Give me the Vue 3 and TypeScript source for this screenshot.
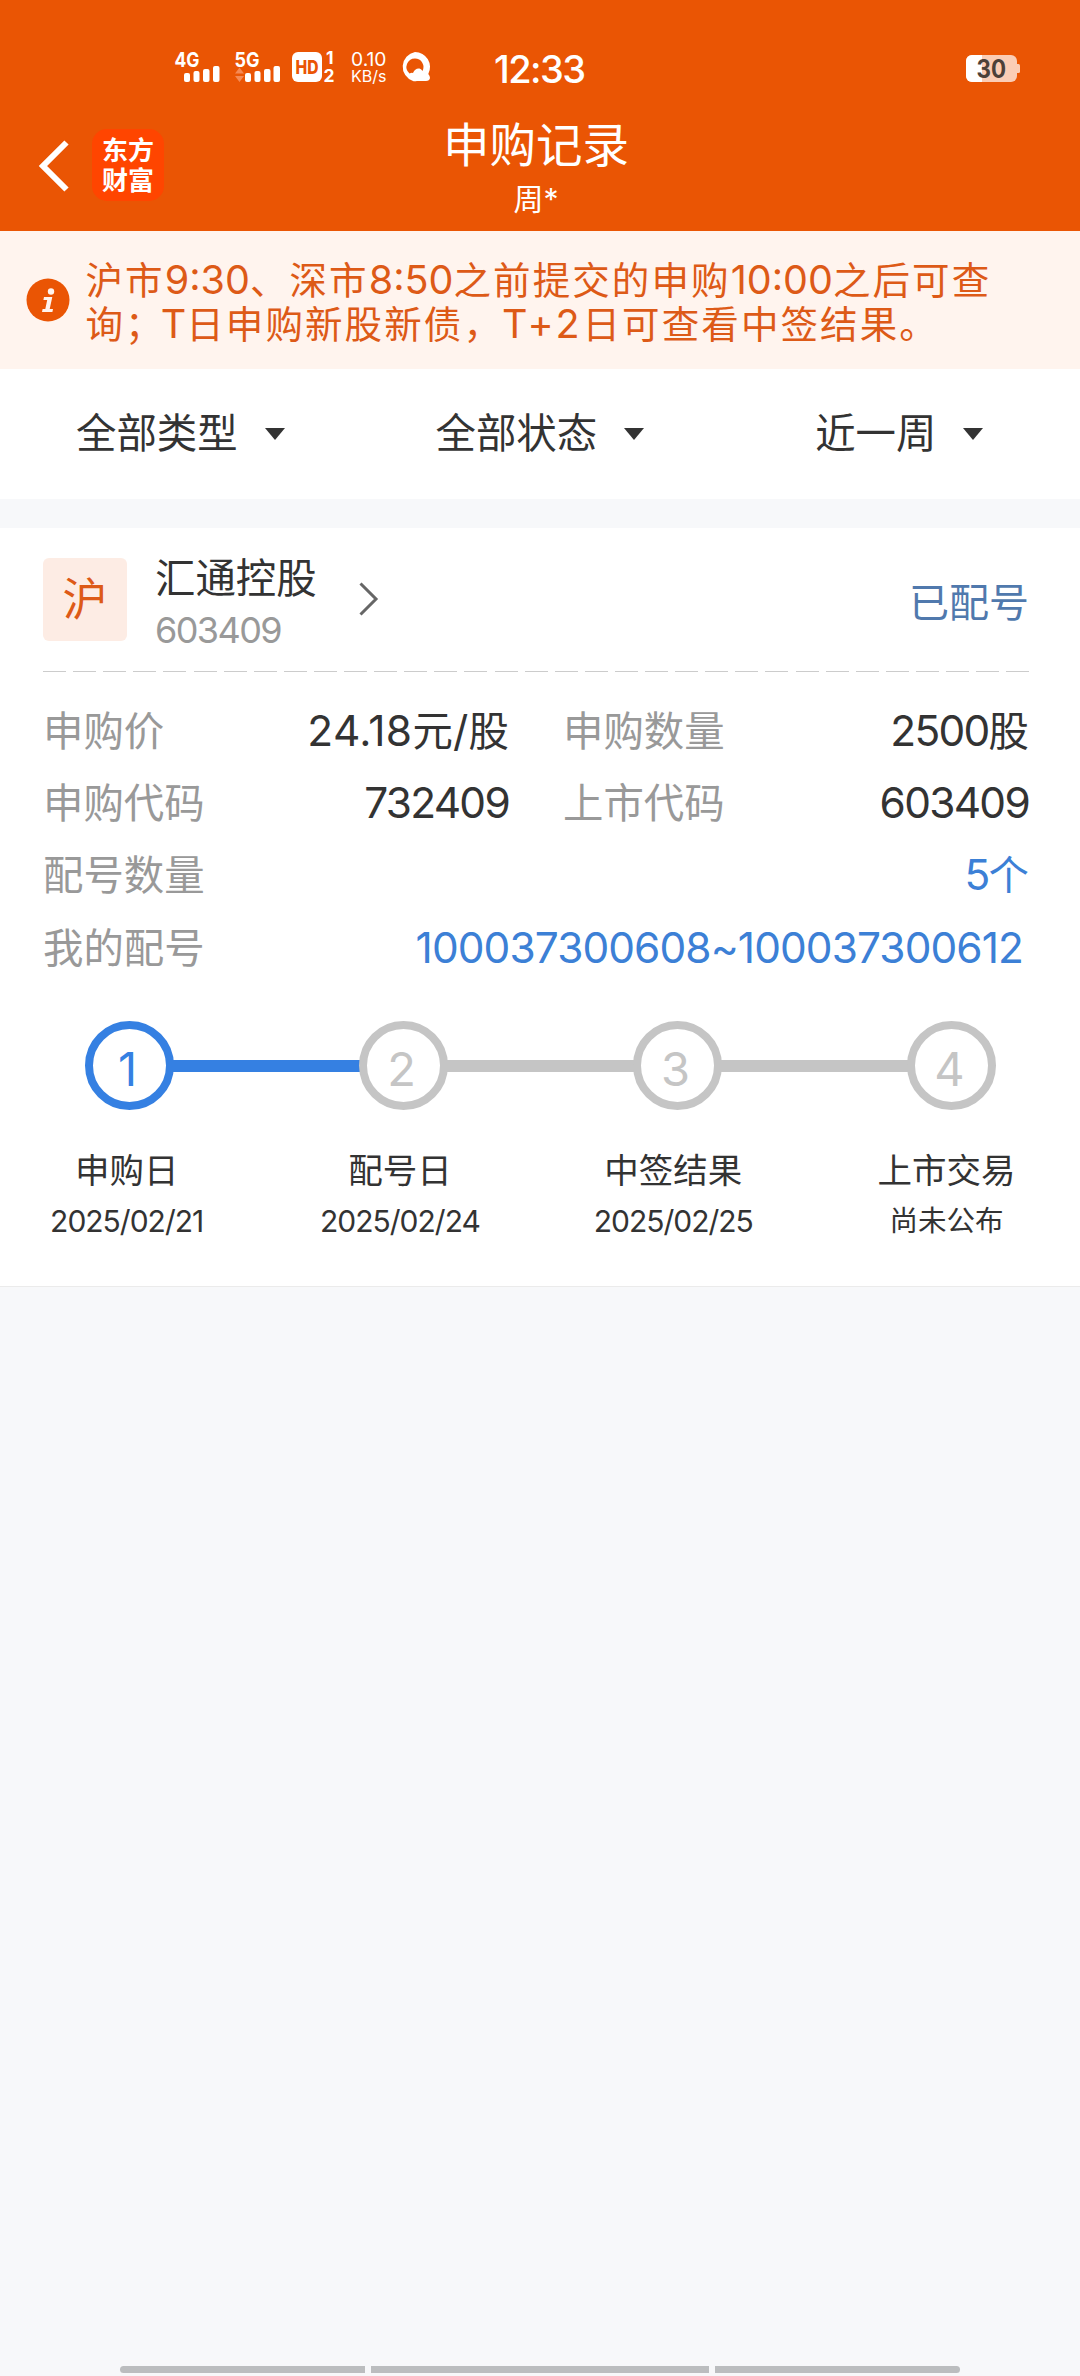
<script setup lang="ts">
interface Filter { label: string; id: string }
interface Step { no: number; title: string; date: string; done: boolean }

const filters: Filter[] = [
  { label: '全部类型', id: 'by-type' },
  { label: '全部状态', id: 'by-state' },
  { label: '近一周', id: 'by-range' },
]

const steps: Step[] = [
  { no: 1, title: '申购日', date: '2025/02/21', done: true },
  { no: 2, title: '配号日', date: '2025/02/24', done: false },
  { no: 3, title: '中签结果', date: '2025/02/25', done: false },
  { no: 4, title: '上市交易', date: '尚未公布', done: false },
]
</script>

<template>
  <div class="screen">
    <header class="header">
      <div class="status">
        <svg class="sig4" width="46" height="30" viewBox="0 0 46 30" fill="#fff">
          <text x="-0.5" y="15" class="net" textLength="25" lengthAdjust="spacingAndGlyphs">4G</text>
          <rect x="9" y="21" width="6" height="9" rx="2" />
          <rect x="18.5" y="19" width="6" height="11" rx="2" />
          <rect x="28" y="17" width="6.5" height="13" rx="2" />
          <rect x="38" y="14" width="6.5" height="16" rx="2" />
        </svg>
        <svg class="sig5" width="46" height="30" viewBox="0 0 46 30" fill="#fff">
          <text x="-0.5" y="15" class="net" textLength="25" lengthAdjust="spacingAndGlyphs">5G</text>
          <path d="M0 21.5 4.5 15.5 9 21.5Z M0 24 9 24 4.5 30Z" fill="#f58a55" />
          <rect x="10" y="21" width="6" height="9" rx="2" />
          <rect x="19.5" y="19" width="6" height="11" rx="2" />
          <rect x="29" y="17" width="6.5" height="13" rx="2" />
          <rect x="38.5" y="14" width="6.5" height="16" rx="2" />
        </svg>
        <svg class="hd" width="43" height="30" viewBox="0 0 43 30" fill="#fff">
          <rect width="30" height="30" rx="6" />
          <text x="3.5" y="22" class="hdt" textLength="23" lengthAdjust="spacingAndGlyphs">HD</text>
          <text x="34" y="12" class="sim">1</text>
          <text x="31.5" y="30" class="sim" textLength="11" lengthAdjust="spacingAndGlyphs">2</text>
        </svg>
        <svg class="speed" width="36" height="32" viewBox="0 0 36 32" fill="#fff">
          <text x="0" y="14" font-size="19" textLength="35.5" lengthAdjust="spacingAndGlyphs">0.10</text>
          <text x="0" y="29.8" font-size="16" textLength="35.5" lengthAdjust="spacingAndGlyphs">KB/s</text>
        </svg>
        <svg class="q" width="30" height="30" viewBox="0 0 30 30">
          <path fill="#fff" fill-rule="evenodd" d="M15 0A15 15 0 0 1 28.3 22Q30 24 30 26Q29.500 29 26 29L17 29Q14 29.500 13 29A15 15 0 0 1 15 0ZM15 6.500A8.500 8.500 0 0 0 9.500 21.500Q11.500 20.500 13 21Q15 16 19.500 16.500Q21.500 17 22.500 19A8.500 8.500 0 0 0 15 6.500Z" />
        </svg>
        <span class="clock">12:33</span>
        <svg class="battery" width="54" height="27" viewBox="0 0 54 27">
          <defs><clipPath id="cell"><rect width="51" height="27" rx="6" /></clipPath></defs>
          <g clip-path="url(#cell)">
            <rect width="51" height="27" fill="#fbcdb5" />
            <rect width="16" height="27" fill="#fff" />
          </g>
          <path d="M51 9h1.500q1.500 0 1.500 1.500v6q0 1.500-1.500 1.500h-1.500z" fill="#fbcdb5" />
          <text x="10.500" y="22.500" class="level" textLength="29.500" lengthAdjust="spacingAndGlyphs">30</text>
        </svg>
      </div>
      <div class="nav">
        <svg class="back" width="32" height="56" viewBox="0 0 32 56">
          <path d="M28.500 4.500 5 28 28.500 51.500" fill="none" stroke="#fff" stroke-width="6" stroke-linecap="butt" />
        </svg>
        <div class="logo"><span>东方</span><span>财富</span></div>
        <div class="heading">
          <h1>申购记录</h1>
          <p>周*</p>
        </div>
      </div>
    </header>

    <section class="notice">
      <svg width="44" height="44" viewBox="0 0 44 44">
        <circle cx="22" cy="22" r="21.500" fill="#ea5504" />
        <circle cx="25" cy="13.500" r="3.200" fill="#fff4ee" />
        <path d="M18 19H26.300L23.700 31H27L26.400 34H16L16.600 31H19.300L21.200 22H17.400Z" fill="#fff4ee" />
      </svg>
      <p>
        <span>沪市<b>9:30</b>、深市<b>8:50</b>之前提交的申购<b>10:00</b>之后可查</span>
        <span>询；<b class="day">T</b>日申购新股新债，<b class="plus">T+2</b>日可查看中签结果。</span>
      </p>
    </section>

    <nav class="filters">
      <div v-for="f in filters" :key="f.id" class="filter" :class="f.id">
        <span>{{ f.label }}</span><i></i>
      </div>
    </nav>

    <section class="card">
      <div class="stock">
        <span class="badge">沪</span>
        <div class="names">
          <span class="name">汇通控股</span>
          <span class="code">603409</span>
        </div>
        <svg width="22" height="36" viewBox="0 0 22 36">
          <path d="M2.500 2.500 18 18 2.500 33.500" fill="none" stroke="#666" stroke-width="3" />
        </svg>
        <span class="state">已配号</span>
      </div>
      <div class="dash"></div>
      <div class="rows">
        <div class="row">
          <div class="cell price"><label>申购价</label><span><b>24.18</b>元<b>/</b>股</span></div>
          <div class="cell"><label>申购数量</label><span><b>2500</b>股</span></div>
        </div>
        <div class="row">
          <div class="cell"><label>申购代码</label><span><b>732409</b></span></div>
          <div class="cell"><label>上市代码</label><span><b>603409</b></span></div>
        </div>
        <div class="row"><label>配号数量</label><span class="link"><b>5</b>个</span></div>
        <div class="row"><label>我的配号</label><span class="link lots"><b>100037300608~100037300612</b></span></div>
      </div>
      <div class="track">
        <template v-for="(s, i) in steps" :key="s.no">
          <div v-if="i > 0" class="line" :class="{ on: steps[i - 1].done }"></div>
          <div class="dot" :class="{ on: s.done }"><span>{{ s.no }}</span></div>
        </template>
      </div>
      <div class="captions">
        <div v-for="s in steps" :key="s.no" class="caption">
          <strong>{{ s.title }}</strong>
          <span :class="{ pending: s.no === 4 }">{{ s.date }}</span>
        </div>
      </div>
    </section>

    <footer class="gesture"><i></i><i class="mid"></i><i></i></footer>
  </div>
</template>

<style>
body { margin: 0; background: #f7f8fa; }
</style>

<style scoped>
.screen {
  width: 1080px;
  height: 2376px;
  display: flex;
  flex-direction: column;
  overflow: hidden;
  background: #f7f8fa;
  color: #333;
  font-family: Inter, "Noto Sans CJK SC", sans-serif;
  white-space: nowrap;
}
* { box-sizing: border-box; }
h1, p { margin: 0; font-weight: 400; }
b { font-weight: 400; }
svg { display: block; flex: none; overflow: visible; }

.header { height: 231px; background: #ea5504; color: #fff; }
.status { display: flex; height: 104px; padding: 52px 60px 0 175px; align-items: flex-start; }
.sig5 { margin-left: 14px; }
.hd { margin-left: 11px; }
.speed { margin-left: 16px; }
.q { margin-left: 13px; }
.net { font-size: 20.5px; font-weight: 700; }
.hdt { font-size: 19px; font-weight: 800; fill: #ea5504; }
.sim { font-size: 17.5px; font-weight: 700; }
.clock { margin-left: 64px; font-size: 38px; line-height: 34px; font-weight: 500; letter-spacing: -1.6px; }
.battery { margin: 3px 0 0 auto; }
.level { font-size: 25px; font-weight: 700; fill: #4d4038; }

.nav { display: flex; padding-left: 38px; }
.back { margin-top: 34px; }
.logo {
  width: 72px; height: 72px; margin: 25px 0 0 22px; padding-top: 7px;
  display: flex; flex-direction: column; align-items: center;
  border-radius: 15px; background: #ff4500;
  font-size: 26px; font-weight: 700; line-height: 30px;
}
.heading { width: 260px; margin-left: 242px; padding-top: 13px; text-align: center; }
.heading h1 { font-size: 46.5px; line-height: 56px; }
.heading p { margin-top: 8px; font-size: 30px; line-height: 36px; }

.notice {
  display: flex; height: 138px; padding: 28px 0 0 25.5px;
  background: #fff4ee; color: #dd5a17; font-size: 37.5px; letter-spacing: 2.1px; line-height: 44px;
}
.notice svg { margin-top: 19px; }
.notice p { margin-left: 16px; }
.notice span { display: block; }
.notice b { font-size: 39.5px; line-height: 1; letter-spacing: 0; }
.notice .day { margin-left: -4px; }
.notice .plus { margin-left: -1px; letter-spacing: 3px; }

.filters { display: flex; height: 130px; background: #fff; font-size: 40.4px; line-height: 132px; }
.filter { display: flex; align-items: center; height: 130px; }
.filter i { margin-left: 27px; border: 10px solid transparent; border-top: 12px solid #333; border-bottom: 0; }
.by-type { margin-left: 76px; }
.by-state { margin-left: 151px; }
.by-range { margin-left: 171px; }

.card { height: 759px; margin-top: 29px; padding: 0 51px 0 43px; background: #fff; border-bottom: 1px solid #ebebeb; }
.stock { display: flex; height: 143px; }
.badge {
  width: 84px; height: 83px; margin-top: 30px; border-radius: 6px;
  background: #fdece4; color: #dd5a17; font-size: 45px; line-height: 83px; text-align: center;
}
.names { display: flex; flex-direction: column; width: 164px; margin: 23px 0 0 28px; }
.name { font-size: 40.4px; line-height: 56px; }
.code { color: #999; font-size: 36px; line-height: 46px; letter-spacing: -1.6px; }
.stock svg { margin: 53px 0 0 39px; }
.state { margin-left: auto; color: #5079ad; font-size: 40px; line-height: 149px; }
.dash { height: 1px; margin-right: -1px; background: repeating-linear-gradient(90deg, #ccc 0 23px, transparent 23px 30.1px); }

.rows { padding-top: 24px; }
.row { display: flex; justify-content: space-between; height: 72.2px; font-size: 40.4px; line-height: 72px; }
.cell { display: flex; justify-content: space-between; width: 466px; }
label { color: #999; }
.row b { font-size: 42.4px; line-height: 1; letter-spacing: -1.7px; }
.row .price b { letter-spacing: 0.4px; }
.row .lots b { letter-spacing: -0.9px; }
.row .link { color: #3c80d6; }
.lots { padding-right: 6px; }

.track { display: flex; align-items: center; margin: 36px 0 0 42px; width: 911px; }
.dot {
  display: flex; align-items: center; justify-content: center; flex: none; width: 89px; height: 89px;
  border: 8.5px solid #c5c5c5; border-radius: 50%; color: #c5c5c5; font-size: 47px;
}
.dot span { padding: 6px 4px 0 0; line-height: 1; }
.dot.on { border-color: #3580e2; color: #3580e2; }
.line { flex: 1; height: 12px; margin: 2px -1px 0; background: #c5c5c5; }
.line.on { background: #3580e2; }

.captions { display: flex; margin: 36px 0 0 -53px; }
.caption { width: 273.3px; flex: none; display: flex; flex-direction: column; align-items: center; }
.caption strong { font-size: 34.5px; font-weight: 400; line-height: 50px; }
.caption span { font-size: 30px; line-height: 50px; letter-spacing: -1px; }
.caption .pending { font-size: 28.5px; letter-spacing: 0; }

.gesture { display: flex; gap: 6px; width: 840px; height: 7px; margin: auto auto 3px; }
.gesture i { width: 245px; background: #bbbdbf; }
.gesture i:first-child { border-radius: 4px 0 0 4px; }
.gesture i:last-child { border-radius: 0 4px 4px 0; }
.gesture .mid { width: 338px; }
</style>
